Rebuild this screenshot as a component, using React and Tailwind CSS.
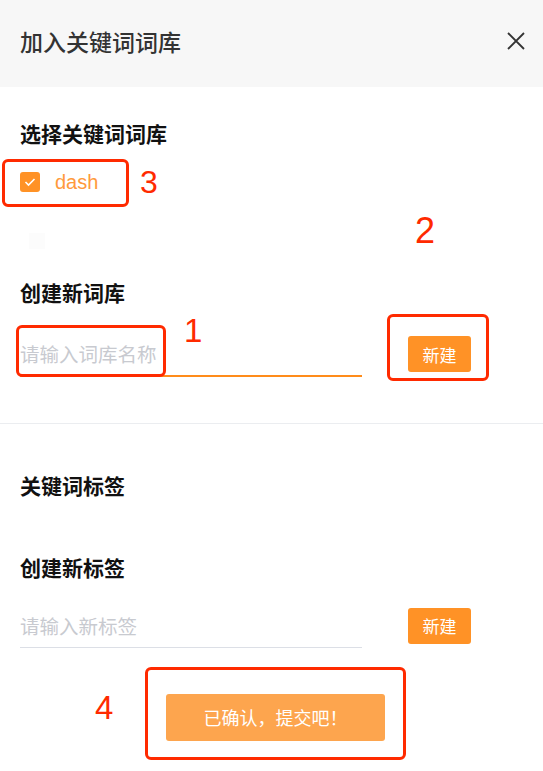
function Mark({ className, children }) {
  return (
    <div
      className={`absolute text-[#ff2a00] leading-none ${className}`}
      style={{ fontFamily: '"Liberation Sans", Arial, sans-serif' }}
    >
      {children}
    </div>
  );
}

function Box({ className }) {
  return (
    <div
      className={`absolute border-[3px] border-[#ff2a00] rounded-[6px] ${className}`}
    />
  );
}

function NewButton() {
  return (
    <button className="w-[63px] h-[36px] bg-[#ff9226] rounded-[3px] text-white text-[17px] leading-none">
      新建
    </button>
  );
}

function SectionTitle({ className, children }) {
  return (
    <div className={`text-[21px] leading-7 font-bold text-[#111] ${className}`}>
      {children}
    </div>
  );
}

function Field({ active, placeholder }) {
  return (
    <div className="w-[342px] flex flex-col">
      <input
        className="w-full h-[43px] text-[19.5px] outline-none placeholder:text-[#c8cad0]"
        placeholder={placeholder}
      />
      {active ? (
        <div className="h-[1.5px] bg-[#ff8c1a]" />
      ) : (
        <div className="h-px bg-[#dcdfe6]" />
      )}
    </div>
  );
}

function App() {
  return (
    <div
      className="relative w-[543px] h-[771px] overflow-hidden bg-white"
      style={{ fontFamily: '"Noto Sans CJK SC", "Noto Sans", sans-serif' }}
    >
      <div className="h-[87px] bg-[#f7f7f7] flex items-center justify-between pl-5 pr-[18px] pb-1">
        <h1 className="text-[23px] text-[#333] font-medium">加入关键词词库</h1>
        <svg width="18" height="18" viewBox="0 0 18 18" className="mt-[-2px]">
          <path d="M1 1L17 17M17 1L1 17" stroke="#333" strokeWidth="1.8" />
        </svg>
      </div>

      <div className="px-5">
        <SectionTitle className="pt-[32px]">选择关键词词库</SectionTitle>
        <div className="mt-[25px] h-5 flex items-center gap-[15px]">
          <div className="w-5 h-5 rounded-[3px] bg-[#ff9226] flex items-center justify-center">
            <svg width="12" height="10" viewBox="0 0 12 10">
              <path
                d="M1.5 5L4.5 8L10.5 2"
                fill="none"
                stroke="white"
                strokeWidth="1.6"
              />
            </svg>
          </div>
          <span
            className="text-[20px] text-[#ff9a3c] leading-5"
            style={{ fontFamily: '"Liberation Sans", Arial, sans-serif' }}
          >
            dash
          </span>
        </div>
        <div className="mt-[41px] ml-[9px] w-4 h-4 bg-[#fcfcfc]" />

        <SectionTitle className="mt-[29px]">创建新词库</SectionTitle>
        <div className="mt-[26px] flex items-center gap-[46px]">
          <Field active placeholder="请输入词库名称" />
          <NewButton />
        </div>
      </div>

      <div className="mt-[46px] h-px bg-[#ebedf0]" />

      <div className="px-5">
        <SectionTitle className="mt-[47px]">关键词标签</SectionTitle>
        <SectionTitle className="mt-[54px]">创建新标签</SectionTitle>
        <div className="mt-[23px] flex items-center gap-[46px]">
          <Field placeholder="请输入新标签" />
          <NewButton />
        </div>
        <button className="mt-[46px] ml-[146px] w-[219px] h-[47px] bg-[#fda54e] rounded-[3px] text-white text-[18px]">
          已确认，提交吧！
        </button>
      </div>

      <Box className="left-[2px] top-[159px] w-[127px] h-[48px]" />
      <Box className="left-[16px] top-[325px] w-[150px] h-[52px]" />
      <Box className="left-[387px] top-[314px] w-[102px] h-[67px]" />
      <Box className="left-[145px] top-[667px] w-[261px] h-[93px]" />

      <Mark className="left-[140px] top-[166px] text-[32px]">3</Mark>
      <Mark className="left-[415px] top-[213px] text-[36px]">2</Mark>
      <Mark className="left-[184px] top-[314px] text-[33px]">1</Mark>
      <Mark className="left-[95px] top-[691px] text-[33px]">4</Mark>
    </div>
  );
}

export default App;
